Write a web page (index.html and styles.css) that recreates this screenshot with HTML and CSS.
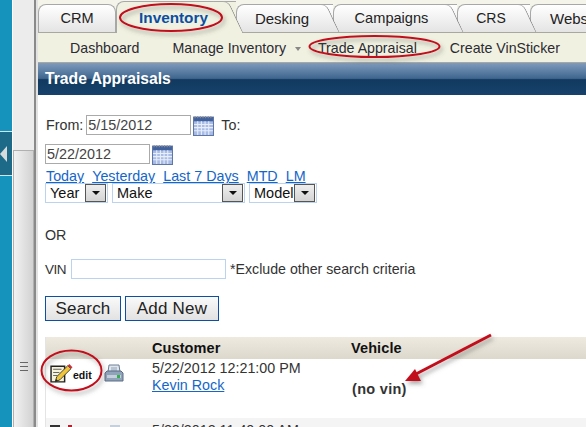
FILE: index.html
```html
<!DOCTYPE html>
<html lang="en">
<head>
    <meta charset="UTF-8">
    <meta name="viewport" content="width=device-width, initial-scale=1.0">
    <title>Trade Appraisals</title>
    <link rel="stylesheet" href="styles.css">
</head>
<body>
    <div class="shell">
        <aside class="rail">
            <div class="rail-teal">
                <div class="rail-toggle"><span class="rail-arrow"></span></div>
            </div>
            <div class="rail-scroll">
                <div class="rail-thumb"><span class="grip"></span></div>
            </div>
        </aside>
        <div class="main">
            <nav class="tabs">
                <a class="tab tab-crm">CRM</a>
                <a class="tab tab-active">Inventory</a>
                <a class="tab tab-desking">Desking</a>
                <a class="tab tab-campaigns">Campaigns</a>
                <a class="tab tab-crs">CRS</a>
                <a class="tab tab-webs">Websites</a>
            </nav>
            <nav class="subnav">
                <a>Dashboard</a>
                <a>Manage Inventory <span class="caret"></span></a>
                <a>Trade Appraisal</a>
                <a>Create VinSticker</a>
            </nav>
            <h1 class="title">Trade Appraisals</h1>
            <form class="filters">
                <div class="row row-from">
                    <label>From:</label>
                    <input class="date" type="text" value="5/15/2012">
                    <svg class="cal" viewBox="0 0 20 20"><use href="#cal-icon"/></svg>
                    <label class="to">To:</label>
                </div>
                <div class="row row-to">
                    <input class="date date-to" type="text" value="5/22/2012">
                    <svg class="cal" viewBox="0 0 20 20">
                        <g id="cal-icon">
                            <rect x="0.5" y="2" width="19" height="17.500" fill="#a9bce6" stroke="#5e76a8"/>
                            <rect x="1" y="2" width="18" height="4" fill="#41619c"/>
                            <path d="M2 1v2M4.500 1v2M7 1v2M9.500 1v2M12 1v2M14.500 1v2M17 1v2" stroke="#8c8f96"/>
                            <path d="M1 9h18M1 12h18M1 15h18M4.500 6v13M8 6v13M11.500 6v13M15 6v13" stroke="#e8eefa"/>
                        </g>
                    </svg>
                </div>
                <div class="quick">
                    <a>Today</a><a>Yesterday</a><a>Last 7 Days</a><a>MTD</a><a>LM</a>
                </div>
                <div class="selects">
                    <div class="sel sel-year"><span>Year</span><b class="drop"></b></div>
                    <div class="sel sel-make"><span>Make</span><b class="drop"></b></div>
                    <div class="sel sel-model"><span>Model</span><b class="drop"></b></div>
                </div>
                <p class="or">OR</p>
                <div class="vin">
                    <label>VIN</label>
                    <input class="vin-input" type="text">
                    <span>*Exclude other search criteria</span>
                </div>
                <div class="buttons">
                    <button class="btn-search" type="button">Search</button>
                    <button class="btn-add" type="button">Add New</button>
                </div>
            </form>
            <div class="grid">
                <div class="grid-head">
                    <span class="col-tools"></span>
                    <span class="col-customer">Customer</span>
                    <span>Vehicle</span>
                </div>
                <div class="grid-row">
                    <div class="col-tools tools">
                        <svg class="edit-icon" viewBox="0 0 22 20">
                            <path d="M1 3h13v15H1z" fill="#f6f1d9" stroke="#222" stroke-width="1.400"/>
                            <path d="M3 6h8M3 9h6M3 12h4" stroke="#666"/>
                            <path d="M5 18l1.500-5L17 2.500l3 3L9.500 16z" fill="#f0c53a" stroke="#3a3a2a" stroke-width="0.900"/>
                            <path d="M17 2.500l1.500-1.500 3 3-1.500 1.500z" fill="#c8303a"/>
                            <path d="M5 18l.8-2.800 2 2z" fill="#222"/>
                        </svg>
                        <span class="edit-label">edit</span>
                        <svg class="print-icon" viewBox="0 0 20 20">
                            <path d="M5 2h10l1 7H4z" fill="#dfe6ee" stroke="#6d7f94"/>
                            <path d="M7 5h6M7 7h6" stroke="#8ea0b4"/>
                            <path d="M1 10l2-2h14l2 2v8H1z" fill="#8fa3bb" stroke="#5b6d84"/>
                            <path d="M3 12h14v3H3z" fill="#c5d0dc"/>
                            <rect x="13" y="12" width="3" height="3" fill="#33b04a"/>
                        </svg>
                    </div>
                    <div class="col-customer">
                        <div>5/22/2012 12:21:00 PM</div>
                        <a>Kevin Rock</a>
                    </div>
                    <div class="novin">(no vin)</div>
                </div>
                <div class="grid-row grid-next">
                    <div class="col-tools tools-next">
                        <span class="stub stub-dark"></span><span class="stub stub-red"></span><span class="stub stub-print"></span>
                    </div>
                    <div class="col-customer">5/22/2012 11:40:00 AM</div>
                </div>
            </div>
        </div>
    </div>
    <!-- markup on top of the screenshot -->
    <svg class="markup" viewBox="0 0 586 427">
        <defs>
            <filter id="soft" x="-20%" y="-20%" width="140%" height="140%">
                <feDropShadow dx="2" dy="3" stdDeviation="2" flood-color="#555" flood-opacity="0.5"/>
            </filter>
        </defs>
        <g fill="none" stroke="#c2101c" stroke-width="2" filter="url(#soft)">
            <ellipse cx="171" cy="17.500" rx="51" ry="13.500"/>
            <ellipse cx="374.500" cy="46.500" rx="65" ry="10.500"/>
            <ellipse cx="71.500" cy="370.500" rx="30" ry="20"/>
        </g>
        <g filter="url(#soft)">
            <path d="M491 335L416 374" stroke="#c2101c" stroke-width="3"/>
            <path d="M405 381L415 369L421 381Z" fill="#c2101c"/>
        </g>
    </svg>
</body>
</html>
```

FILE: styles.css
```css
* {
    box-sizing: border-box;
}
html, body {
    margin: 0;
    height: 427px;
    overflow: hidden;
}
body {
    position: relative;
    width: 586px;
    font-family: "Liberation Sans", Arial, sans-serif;
    font-size: 14.3px;
    color: #333;
    background: #fff;
}
a {
    color: inherit;
}
.shell {
    display: flex;
    height: 427px;
}

/* left rail */
.rail {
    width: 38px;
    flex: none;
    display: flex;
    border-right: 2px solid #e2e2e2;
}
.rail-teal {
    width: 12px;
    background: #1693bd;
    padding-top: 131px;
}
.rail-toggle {
    height: 45px;
    background: #1d6a88;
    border-top: 1px solid #cfe6ee;
    border-bottom: 1px solid #cfe6ee;
    display: flex;
    align-items: center;
}
.rail-arrow {
    border: 8px solid transparent;
    border-left: 0;
    border-right: 7px solid #d6dada;
}
.rail-scroll {
    width: 24px;
    padding-top: 150px;
    background: #ececec;
    border-left: 1px solid #fff;
    border-right: 2px solid #8a8a8a;
}
.rail-thumb {
    height: 277px;
    background: linear-gradient(to right, #f2f2f2, #d2d2d2);
    border: 1px solid #b0b0b0;
    border-bottom: 0;
    display: flex;
    justify-content: center;
    padding-top: 211px;
}
.grip {
    width: 8px;
    height: 9px;
    border-top: 1px solid #666;
    border-bottom: 1px solid #666;
    background: linear-gradient(#666, #666) center / 100% 1px no-repeat;
}

/* tabs */
.main {
    flex: 1;
    min-width: 0;
    overflow: hidden;
}
.tabs {
    display: flex;
    align-items: flex-start;
    height: 33px;
    padding-top: 4px;
    border-bottom: 1px solid #a8a8a0;
    background: #f4f4ea;
}
.tab {
    position: relative;
    flex: none;
    height: 28px;
    padding: 5px 6px 0 0;
    text-align: center;
    font-size: 14.600px;
    color: #222;
    background: linear-gradient(#ffffff, #e4e4e4);
    border: 1px solid #a8a8a8;
    border-right: 0;
    border-bottom: 0;
    border-radius: 8px 0 0 0;
}
/* slanted right edge of a tab */
.tab::after {
    content: "";
    position: absolute;
    top: -1px;
    bottom: 0;
    right: 0;
    width: 14px;
    background: inherit;
    border-top: 1px solid #a8a8a8;
    border-right: 1px solid #888;
    border-radius: 0 6px 0 0;
    transform: skewX(25deg);
}
.tab-crm {
    width: 78px;
    padding-right: 0;
    border-right: 1px solid #a8a8a8;
    border-radius: 8px 8px 0 0;
    z-index: 6;
}
.tab-crm::after {
    display: none;
}
.tab-active {
    width: 120px;
    height: 32px;
    margin-top: -3px;
    padding-top: 7px;
    font-size: 15.300px;
    font-weight: bold;
    color: #0b4ea2;
    background: #f1f1e1;
    z-index: 7;
}
.tab-desking {
    width: 97px;
    font-size: 15px;
    z-index: 5;
}
.tab-campaigns {
    width: 124px;
    padding-right: 8px;
    z-index: 4;
}
.tab-crs {
    width: 73px;
    font-size: 14px;
    z-index: 3;
}
.tab-webs {
    width: 90px;
    padding: 5px 0 0 19px;
    text-align: left;
    font-size: 15px;
    white-space: nowrap;
    z-index: 2;
}

/* sub navigation */
.subnav {
    display: flex;
    align-items: center;
    height: 30px;
    padding-left: 32px;
    background: #f1f1e1;
    border-bottom: 1px solid #a8a8a0;
    font-size: 14.200px;
    color: #2b2b33;
    white-space: nowrap;
}
.subnav a:nth-child(2) {
    margin-left: 33px;
}
.subnav a:nth-child(3) {
    margin-left: 17px;
}
.subnav a:nth-child(4) {
    margin-left: 33px;
}
.caret {
    display: inline-block;
    margin-left: 5px;
    border: 3px solid transparent;
    border-top: 4px solid #888;
    border-bottom: 0;
    vertical-align: middle;
}

.title {
    margin: 0;
    height: 32px;
    padding: 7px 7px 0;
    font-size: 15.700px;
    color: #fff;
    background: linear-gradient(#7f9bbc 0, #3f668f 48%, #123a60 52%, #17426b 100%);
}

/* search form */
.filters {
    padding: 19px 0 0 7px;
}
.row {
    display: flex;
    align-items: center;
}
.row-from {
    height: 22px;
    padding-left: 1px;
}
.row-from .date {
    margin-left: 3px;
}
.row-to {
    height: 22px;
    margin-top: 7px;
}
.date {
    width: 105px;
    height: 20px;
    margin: 0 2px 0 5px;
    padding: 0 1px;
    font: 14.400px "Liberation Sans", Arial, sans-serif;
    color: #444;
    border: 1px solid #aaa;
}
.row-to .date-to {
    margin-left: 0;
}
.cal {
    width: 21px;
    height: 21px;
}
.to {
    margin-left: 7px;
}
.quick {
    display: flex;
    gap: 8px;
    height: 15px;
    margin-top: 4px;
    padding-left: 1px;
    line-height: 15px;
    color: #1466c8;
}
.quick a {
    text-decoration: underline;
}
.selects {
    display: flex;
    gap: 4px;
    margin-top: -1px;
}
.sel {
    display: flex;
    align-items: center;
    justify-content: space-between;
    height: 20px;
    padding: 0 1px 0 4px;
    font-size: 14.500px;
    color: #111;
    border: 1px solid #bcd3ef;
}
.sel-year {
    width: 63px;
}
.sel-make {
    width: 133px;
}
.sel-model {
    width: 68px;
}
.drop {
    width: 21px;
    height: 18px;
    background: linear-gradient(#eee, #d4d4d4);
    border: 1px solid #555;
    display: flex;
    align-items: center;
    justify-content: center;
}
.drop::after {
    content: "";
    border: 4px solid transparent;
    border-top: 4px solid #111;
    border-bottom: 0;
}
.or {
    margin: 24px 0 0;
    height: 16px;
    line-height: 16px;
}
.vin {
    display: flex;
    align-items: center;
    height: 20px;
    margin-top: 16px;
    font-size: 14.200px;
}
.vin label {
    width: 20px;
    font-size: 13.500px;
    letter-spacing: -0.5px;
}
.vin-input {
    width: 155px;
    height: 20px;
    margin: 0 4px 0 6px;
    border: 1px solid #bcd3ef;
}
.buttons {
    display: flex;
    gap: 4px;
    margin-top: 17px;
}
.buttons button {
    height: 25px;
    padding: 0;
    font: 17px "Liberation Sans", Arial, sans-serif;
    letter-spacing: 0.2px;
    color: #222;
    background: linear-gradient(#fafafa, #e2e2e2);
    border: 1px solid #0d4ea6;
}
.btn-search {
    width: 76px;
}
.btn-add {
    width: 94px;
}

/* results */
.grid {
    margin: 16px 0 0 7px;
    border-left: 1px solid #e4e4e4;
}
.grid-head {
    display: flex;
    align-items: center;
    height: 22px;
    font-weight: bold;
    font-size: 14.500px;
    letter-spacing: 0.1px;
    color: #111;
    background: linear-gradient(#eeeae0, #dcd8cc);
}
.col-tools {
    width: 106px;
    flex: none;
}
.col-customer {
    width: 199px;
    flex: none;
}
.grid-row {
    display: flex;
    height: 59px;
    padding-top: 1px;
}
.grid-row a {
    display: block;
    margin-top: 1px;
    text-decoration: underline;
    color: #1466c8;
}
.tools {
    display: flex;
    align-items: flex-start;
    padding: 3px 0 0 4px;
}
.edit-icon {
    width: 23px;
    height: 21px;
}
.edit-label {
    margin: 6px 0 0 0;
    width: 22px;
    font-size: 10.500px;
    font-weight: bold;
    color: #111;
}
.print-icon {
    width: 20px;
    height: 20px;
    margin-left: 9px;
}
.novin {
    margin-top: 21px;
    margin-left: 1px;
    font-weight: bold;
    font-size: 14.500px;
    letter-spacing: 0.3px;
}
.grid-next {
    background: #f4f4f4;
    padding-top: 4px;
}
.tools-next {
    display: flex;
    gap: 8px;
    padding: 3px 0 0 4px;
}
.stub {
    display: block;
    width: 10px;
    height: 8px;
}
.stub-dark {
    background: #333;
}
.stub-red {
    width: 4px;
    background: #b5202a;
}
.stub-print {
    margin-left: 30px;
    background: #c5d0dc;
}

.markup {
    position: absolute;
    left: 0;
    top: 0;
    z-index: 10;
    width: 586px;
    height: 427px;
    pointer-events: none;
}
```
